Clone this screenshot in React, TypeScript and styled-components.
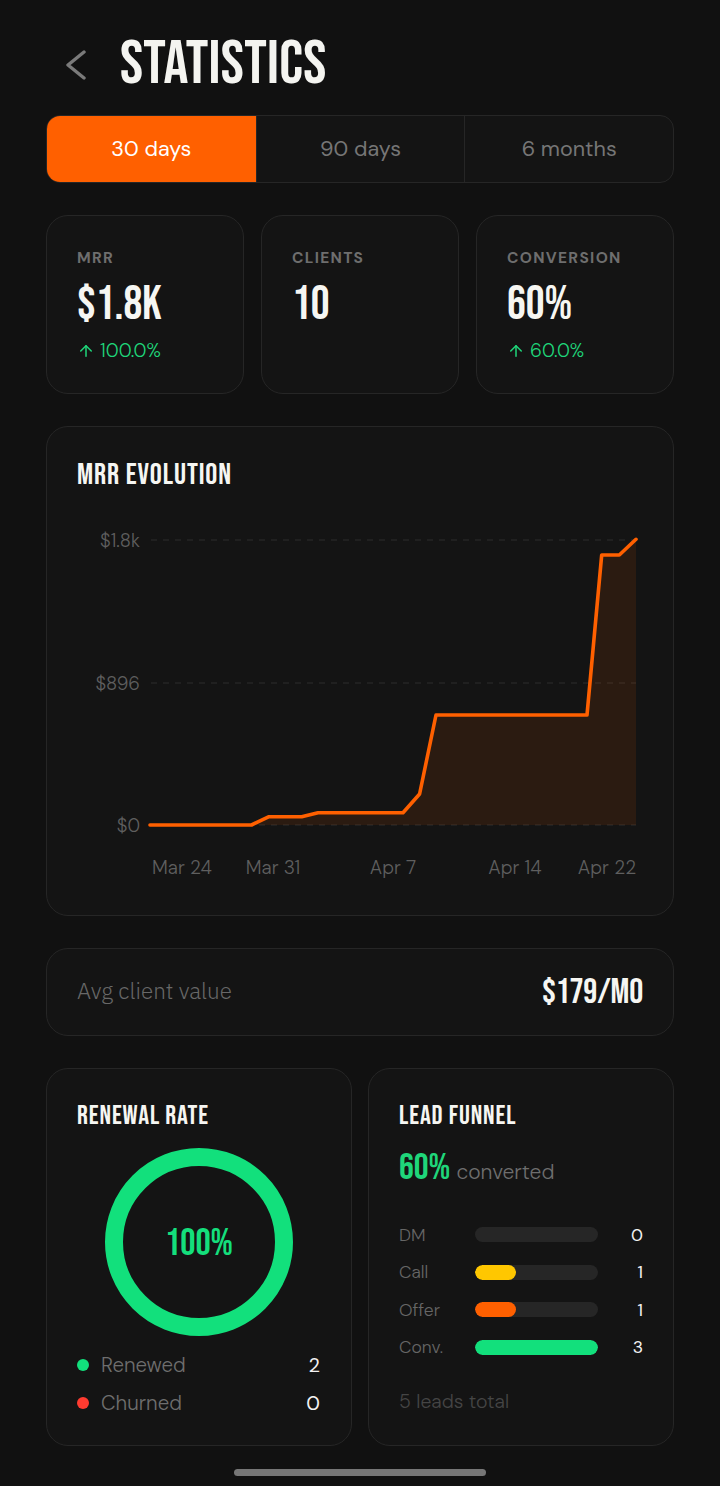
import React from "react";
import styled, { createGlobalStyle } from "styled-components";
import { ArrowUp } from "lucide-react";

const GlobalStyle = createGlobalStyle`
  html, body { margin: 0; padding: 0; background: #111111; }
  body { font-family: "DM Sans", "Inter", sans-serif; color: #f2f2f2; }
  * { box-sizing: border-box; }
`;

const DISPLAY = `"Bebas Neue", "Oswald", "Roboto Condensed", sans-serif`;

const Page = styled.div`
  width: 720px;
  min-height: 1486px;
  padding: 0 46px 10px;
  display: flex;
  flex-direction: column;
`;

const Header = styled.header`
  display: flex;
  align-items: center;
  gap: 32px;
  padding: 34px 0 19px 18px;
`;

const BackButton = styled.button`
  background: none;
  border: none;
  padding: 0;
  width: 24px;
  height: 30px;
  display: flex;
  align-items: center;
  justify-content: center;
  cursor: pointer;
`;

const Title = styled.h1`
  margin: 0;
  font-family: ${DISPLAY};
  font-weight: 400;
  font-size: 62px;
  line-height: 62px;
  color: #f4f4f0;
  letter-spacing: 0.3px;
`;

const Sections = styled.div`
  display: flex;
  flex-direction: column;
  gap: 32px;
`;

const Tabs = styled.div`
  display: grid;
  grid-template-columns: repeat(3, 1fr);
  height: 68px;
  border: 1px solid #262626;
  border-radius: 14px;
  overflow: hidden;
  background: #141414;
`;

const Tab = styled.button<{ $active?: boolean }>`
  border: none;
  border-left: 1px solid ${(p) => (p.$active ? "transparent" : "#262626")};
  &:first-child { border-left: none; }
  background: ${(p) => (p.$active ? "#ff6000" : "transparent")};
  color: ${(p) => (p.$active ? "#ffffff" : "#767676")};
  font-family: "DM Sans", "Inter", sans-serif;
  font-size: 21.5px;
  font-weight: 400;
  cursor: pointer;
`;

const Card = styled.section`
  background: #141414;
  border: 1px solid #262626;
  border-radius: 22px;
`;

const StatGrid = styled.div`
  display: grid;
  grid-template-columns: repeat(3, 1fr);
  gap: 17px;
`;

const StatCard = styled(Card)`
  height: 179px;
  padding: 33px 30px 0;
  display: flex;
  flex-direction: column;
`;

const StatLabel = styled.div`
  font-family: "DM Sans", "Inter", sans-serif;
  font-weight: 700;
  font-size: 15.5px;
  line-height: 18px;
  letter-spacing: 1.3px;
  color: #6e6e6e;
`;

const StatValue = styled.div`
  margin-top: 15px;
  font-family: ${DISPLAY};
  font-size: 47px;
  line-height: 46px;
  color: #f6f6f2;
`;

const Change = styled.div`
  margin-top: 12px;
  display: flex;
  align-items: center;
  gap: 5px;
  font-size: 19px;
  line-height: 22px;
  font-weight: 300;
  color: #1fd67a;
`;

const ChartTitle = styled.h2`
  margin: 0;
  font-family: ${DISPLAY};
  font-weight: 400;
  font-size: 30px;
  line-height: 30px;
  letter-spacing: 0.9px;
  color: #f6f6f2;
`;

const PanelTitle = styled(ChartTitle)`
  font-size: 27px;
  line-height: 27px;
`;

const ChartCard = styled(Card)`
  padding: 33px 30px 34px;
  display: flex;
  flex-direction: column;
`;

const ChartSvg = styled.svg`
  display: block;
  margin-top: 20px;
`;

const AvgCard = styled(Card)`
  height: 88px;
  padding: 0 30px;
  display: flex;
  align-items: center;
  justify-content: space-between;
`;

const AvgLabel = styled.span`
  font-family: "IBM Plex Sans", "DM Sans", sans-serif;
  font-weight: 300;
  font-size: 22.5px;
  color: #686868;
  margin-top: -3px;
`;

const AvgValue = styled.span`
  font-family: ${DISPLAY};
  font-size: 35px;
  line-height: 35px;
  letter-spacing: -0.2px;
  color: #f6f6f2;
`;

const BottomGrid = styled.div`
  display: grid;
  grid-template-columns: 1fr 1fr;
  gap: 16px;
`;

const PanelCard = styled(Card)`
  height: 378px;
  padding: 34px 30px 0;
  display: flex;
  flex-direction: column;
`;

const DonutWrap = styled.div`
  position: relative;
  width: 188px;
  height: 188px;
  margin: 18px auto 0;
`;

const DonutCenter = styled.div`
  position: absolute;
  inset: 0;
  display: flex;
  align-items: center;
  justify-content: center;
  font-family: ${DISPLAY};
  font-size: 38px;
  line-height: 38px;
  padding-top: 3px;
  color: #14df7c;
`;

const Legend = styled.div`
  margin-top: 10px;
  display: flex;
  flex-direction: column;
`;

const LegendRow = styled.div`
  display: flex;
  align-items: center;
  height: 38px;
  padding-right: 1px;
`;

const Dot = styled.span<{ $color: string }>`
  width: 12px;
  height: 12px;
  border-radius: 50%;
  background: ${(p) => p.$color};
  margin-right: 12px;
`;

const LegendLabel = styled.span`
  flex: 1;
  font-size: 20.5px;
  font-weight: 300;
  color: #6e6e6e;
`;

const LegendValue = styled.span`
  font-size: 20px;
  font-weight: 400;
  color: #f2f2f2;
`;

const Converted = styled.div`
  margin-top: 20px;
  display: flex;
  align-items: baseline;
  gap: 6px;
`;

const ConvPct = styled.span`
  font-family: ${DISPLAY};
  font-size: 37px;
  line-height: 37px;
  color: #1fd67a;
`;

const ConvText = styled.span`
  font-size: 21px;
  font-weight: 300;
  color: #6e6e6e;
`;

const FunnelList = styled.div`
  margin-top: 29px;
  display: flex;
  flex-direction: column;
`;

const FunnelRow = styled.div`
  display: grid;
  grid-template-columns: 76px 123px 1fr;
  align-items: center;
  height: 37.5px;
`;

const FunnelLabel = styled.span`
  font-size: 17.5px;
  font-weight: 300;
  color: #666;
`;

const Track = styled.div`
  height: 15px;
  border-radius: 8px;
  background: #262626;
  overflow: hidden;
`;

const Fill = styled.div<{ $color: string }>`
  height: 100%;
  border-radius: 8px;
  background: ${(p) => p.$color};
`;

const FunnelValue = styled.span`
  text-align: right;
  font-size: 17.5px;
  color: #f2f2f2;
`;

const Total = styled.div`
  margin-top: 23px;
  font-size: 19.5px;
  font-weight: 300;
  color: #454545;
`;

const HomeBar = styled.div`
  width: 252px;
  height: 7px;
  border-radius: 4px;
  background: #767676;
  margin: 23px auto 0;
`;

const stats = [
  { label: "MRR", value: "$1.8K", change: "100.0%" },
  { label: "CLIENTS", value: "10" },
  { label: "CONVERSION", value: "60%", change: "60.0%" },
];

const linePts: [number, number][] = [
  [73, 315],
  [174.5, 315],
  [192, 306.7],
  [224.7, 306.7],
  [241, 302.7],
  [326, 302.7],
  [342.6, 284],
  [359, 205],
  [510, 205],
  [524.7, 45],
  [542.3, 45],
  [559, 29.3],
];

const yTicks = [
  { y: 30, label: "$1.8k" },
  { y: 173, label: "$896" },
  { y: 315, label: "$0" },
];

const xTicks = [
  { x: 105, label: "Mar 24" },
  { x: 196, label: "Mar 31" },
  { x: 316, label: "Apr 7" },
  { x: 438, label: "Apr 14" },
  { x: 530, label: "Apr 22" },
];

const funnel = [
  { label: "DM", value: 0, color: "#262626" },
  { label: "Call", value: 1, color: "#ffc700" },
  { label: "Offer", value: 1, color: "#ff6000" },
  { label: "Conv.", value: 3, color: "#12e07c" },
];

function Chart() {
  const line = linePts.map((p) => p.join(",")).join(" ");
  const area = `M73,315 L${linePts.map((p) => p.join(",")).join(" L")} L559,315 Z`;
  return (
    <ChartSvg width={566} height={371} viewBox="0 0 566 371">
      {yTicks.map((t) => (
        <g key={t.label}>
          <line x1={74} x2={559} y1={t.y} y2={t.y} stroke="#2c2c2c" strokeWidth={1.2} strokeDasharray="6 6" />
          <text x={63} y={t.y + 6.5} textAnchor="end" fill="#5f5f5f" fontSize={18.5} fontFamily="DM Sans, sans-serif" fontWeight={300}>
            {t.label}
          </text>
        </g>
      ))}
      <path d={area} fill="#ff6000" fillOpacity={0.1} />
      <polyline points={line} fill="none" stroke="#ff6000" strokeWidth={3.6} strokeLinejoin="round" strokeLinecap="round" />
      {xTicks.map((t) => (
        <text key={t.label} x={t.x} y={364} textAnchor="middle" fill="#5f5f5f" fontSize={19} fontFamily="DM Sans, sans-serif" fontWeight={300}>
          {t.label}
        </text>
      ))}
    </ChartSvg>
  );
}

export default function App() {
  return (
    <>
      <GlobalStyle />
      <Page>
        <Header>
          <BackButton aria-label="Back">
            <svg width="22" height="30" viewBox="0 0 22 30">
              <path d="M19 2 L3 15 L19 28" fill="none" stroke="#7a7a7a" strokeWidth={3.4} strokeLinecap="round" strokeLinejoin="round" />
            </svg>
          </BackButton>
          <Title>Statistics</Title>
        </Header>
        <Sections>
          <Tabs>
            <Tab $active>30 days</Tab>
            <Tab>90 days</Tab>
            <Tab>6 months</Tab>
          </Tabs>

          <StatGrid>
            {stats.map((s) => (
              <StatCard key={s.label}>
                <StatLabel>{s.label}</StatLabel>
                <StatValue>{s.value}</StatValue>
                {s.change && (
                  <Change>
                    <ArrowUp size={18} strokeWidth={2} />
                    {s.change}
                  </Change>
                )}
              </StatCard>
            ))}
          </StatGrid>

          <ChartCard>
            <ChartTitle>MRR Evolution</ChartTitle>
            <Chart />
          </ChartCard>

          <AvgCard>
            <AvgLabel>Avg client value</AvgLabel>
            <AvgValue>$179/MO</AvgValue>
          </AvgCard>

          <BottomGrid>
            <PanelCard>
              <PanelTitle>Renewal Rate</PanelTitle>
              <DonutWrap>
                <svg width="188" height="188" viewBox="0 0 188 188">
                  <circle cx="94" cy="94" r="85" fill="none" stroke="#12e07c" strokeWidth="18" />
                </svg>
                <DonutCenter>100%</DonutCenter>
              </DonutWrap>
              <Legend>
                <LegendRow>
                  <Dot $color="#12e07c" />
                  <LegendLabel>Renewed</LegendLabel>
                  <LegendValue>2</LegendValue>
                </LegendRow>
                <LegendRow>
                  <Dot $color="#ff3b30" />
                  <LegendLabel>Churned</LegendLabel>
                  <LegendValue>0</LegendValue>
                </LegendRow>
              </Legend>
            </PanelCard>

            <PanelCard>
              <PanelTitle>Lead Funnel</PanelTitle>
              <Converted>
                <ConvPct>60%</ConvPct>
                <ConvText>converted</ConvText>
              </Converted>
              <FunnelList>
                {funnel.map((f) => (
                  <FunnelRow key={f.label}>
                    <FunnelLabel>{f.label}</FunnelLabel>
                    <Track>
                      <Fill $color={f.color} style={{ width: `${(f.value / 3) * 100}%` }} />
                    </Track>
                    <FunnelValue>{f.value}</FunnelValue>
                  </FunnelRow>
                ))}
              </FunnelList>
              <Total>5 leads total</Total>
            </PanelCard>
          </BottomGrid>
        </Sections>
        <HomeBar />
      </Page>
    </>
  );
}
